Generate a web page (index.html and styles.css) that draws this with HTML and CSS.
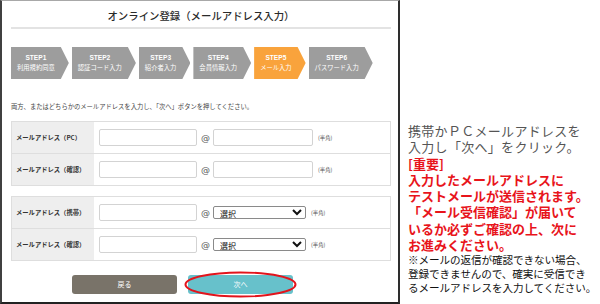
FILE: index.html
```html
<!DOCTYPE html>
<html lang="ja">
<head>
<meta charset="utf-8">
<title>オンライン登録（メールアドレス入力）</title>
<link rel="stylesheet" href="styles.css">
</head>
<body>
<div class="page">
  <div class="frame">
    <h1 class="title">オンライン登録（メールアドレス入力）</h1>
    <ol class="steps">
      <li class="step"><span class="step-no">STEP1</span><span class="step-name">利用規約同意</span></li>
      <li class="step"><span class="step-no">STEP2</span><span class="step-name">認証コード入力</span></li>
      <li class="step"><span class="step-no">STEP3</span><span class="step-name">紹介者入力</span></li>
      <li class="step"><span class="step-no">STEP4</span><span class="step-name">会員情報入力</span></li>
      <li class="step step-current"><span class="step-no">STEP5</span><span class="step-name">メール入力</span></li>
      <li class="step"><span class="step-no">STEP6</span><span class="step-name">パスワード入力</span></li>
    </ol>
    <p class="lead">両方、またはどちらかのメールアドレスを入力し、「次へ」ボタンを押してください。</p>

    <div class="form-table">
      <div class="form-row">
        <div class="form-label">メールアドレス（PC）</div>
        <div class="form-value">
          <input class="box" type="text"><span class="at">@</span><input class="box box-domain" type="text"><span class="hint">(半角)</span>
        </div>
      </div>
      <div class="form-row">
        <div class="form-label">メールアドレス（確認）</div>
        <div class="form-value">
          <input class="box" type="text"><span class="at">@</span><input class="box box-domain" type="text"><span class="hint">(半角)</span>
        </div>
      </div>
    </div>

    <div class="form-table form-table-mobile">
      <div class="form-row">
        <div class="form-label">メールアドレス（携帯）</div>
        <div class="form-value">
          <input class="box" type="text"><span class="at">@</span><select class="pick"><option>選択</option></select><span class="hint">(半角)</span>
        </div>
      </div>
      <div class="form-row">
        <div class="form-label">メールアドレス（確認）</div>
        <div class="form-value">
          <input class="box" type="text"><span class="at">@</span><select class="pick"><option>選択</option></select><span class="hint">(半角)</span>
        </div>
      </div>
    </div>

    <div class="actions">
      <button class="btn btn-back" type="button">戻る</button>
      <div class="next-wrap">
        <button class="btn btn-next" type="button">次へ</button>
        <svg class="ring" viewBox="0 0 112 28" preserveAspectRatio="none" aria-hidden="true"><ellipse cx="56" cy="14" rx="54.5" ry="12.5" fill="none" stroke="#e3141c" stroke-width="2"/></svg>
      </div>
    </div>
  </div>

  <div class="side">
    <p class="side-gray">携帯かＰＣメールアドレスを<br>入力し「次へ」をクリック。</p>
    <p class="side-red">[重要]<br>入力したメールアドレスに<br>テストメールが送信されます。<br>「メール受信確認」が届いて<br>いるか必ずご確認の上、次に<br>お進みください。</p>
    <p class="side-note">※メールの返信が確認できない場合、<br>登録できませんので、確実に受信でき<br>るメールアドレスを入力してください。</p>
  </div>
</div>
</body>
</html>
```

FILE: styles.css
```css
* { box-sizing: border-box; }

html, body {
  margin: 0;
  padding: 0;
  background: #ffffff;
}

body {
  font-family: "Noto Sans CJK JP", "Noto Sans", sans-serif;
  color: #333;
}

.page {
  display: flex;
  width: 600px;
  height: 304px;
  overflow: hidden;
}

.frame {
  flex: 0 0 400px;
  height: 304px;
  border-top: 1px solid #a8a8a8;
  border-left: 2px solid #404040;
  border-right: 2px solid #2e2e2e;
  border-bottom: 2px solid #222;
  padding: 0 7px 0 9px;
  display: flex;
  flex-direction: column;
}

.title {
  margin: 0;
  padding: 8px 0 4px;
  font-size: 10.4px;
  line-height: 14px;
  font-weight: 500;
  color: #2a2a2a;
  text-align: center;
  border-bottom: 2px solid #e3e3e3;
}

.steps {
  list-style: none;
  margin: 18px 0 0;
  padding: 0;
  display: flex;
  gap: 3px;
}

.step {
  height: 32px;
  padding: 0 14px 0 6px;
  background: #9d9d9d;
  color: #fff;
  display: flex;
  flex-direction: column;
  justify-content: center;
  align-items: center;
  clip-path: polygon(0 0, calc(100% - 8px) 0, 100% 50%, calc(100% - 8px) 100%, 0 100%);
}

.step-current { background: #f9a33c; }

.step-no {
  font-family: "Liberation Sans", sans-serif;
  font-size: 6.6px;
  font-weight: bold;
  line-height: 10px;
}

.step-name {
  font-size: 6.3px;
  line-height: 10px;
  white-space: nowrap;
}

.lead {
  margin: 23px 0 0;
  font-size: 6.3px;
  line-height: 9px;
  color: #444;
  white-space: nowrap;
}

.form-table {
  margin-top: 10px;
  border: 1px solid #dedede;
  border-bottom: none;
}

.form-table-mobile { margin-top: 10px; }

.form-row {
  display: grid;
  grid-template-columns: 82px 1fr;
  height: 32px;
  border-bottom: 1px solid #dedede;
}

.form-label {
  background: #eeeeee;
  padding-left: 4px;
  display: flex;
  align-items: center;
  font-size: 6.3px;
  font-weight: bold;
  color: #333;
  white-space: nowrap;
}

.form-value {
  display: flex;
  align-items: center;
  padding-left: 5px;
}

.box {
  width: 98px;
  height: 17px;
  border: 1px solid #d3d3d3;
  border-radius: 2px;
  background: #fff;
  padding: 0;
  margin: 0;
}

.box-domain { width: 100px; }

.at {
  font-family: "DejaVu Sans", sans-serif;
  font-size: 9px;
  color: #555;
  margin: 0 3px 0 4px;
}

.pick {
  width: 93px;
  height: 13px;
  font-family: "Noto Sans CJK JP", sans-serif;
  font-size: 8px;
  color: #111;
  border: 1px solid #8a8a8a;
  border-radius: 2px;
  background: #fff;
  padding: 0 0 0 2px;
  margin: 0;
}

.hint {
  font-size: 5.4px;
  color: #555;
  margin-left: 5px;
  white-space: nowrap;
}

.actions {
  margin-top: 14px;
  padding-left: 61px;
  display: flex;
  align-items: flex-start;
  gap: 11px;
}

.btn {
  display: block;
  width: 105px;
  height: 19px;
  border: none;
  border-radius: 3px;
  color: #fff;
  font-family: "Noto Sans CJK JP", sans-serif;
  font-size: 7px;
  line-height: 19px;
  padding: 0;
  margin: 0;
}

.btn-back { background: #797369; }
.btn-next { background: #67c1cb; }

.next-wrap {
  position: relative;
  display: flex;
}

.ring {
  position: absolute;
  left: -4px;
  top: -4px;
  width: 113px;
  height: 27px;
  pointer-events: none;
}

.side {
  margin-left: 8px;
  padding-top: 123px;
  white-space: nowrap;
}

.side p { margin: 0; }

.side-gray {
  font-size: 13px;
  line-height: 16.3px;
  letter-spacing: 0.3px;
  color: #555;
}

.side-red {
  font-size: 13px;
  line-height: 16.3px;
  font-weight: bold;
  color: #e8141b;
}

.side-note {
  font-size: 10.6px;
  line-height: 14px;
  letter-spacing: -0.1px;
  color: #111;
}
```
